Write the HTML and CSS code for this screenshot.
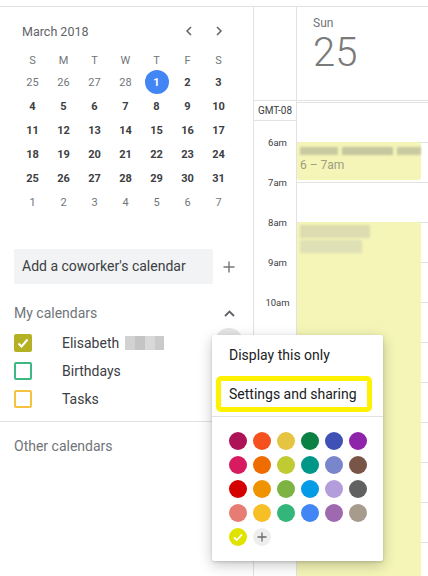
FILE: index.html
```html
<!DOCTYPE html>
<html>
<head>
<meta charset="utf-8">
<link rel="stylesheet" href="styles.css">
</head>
<body>
<div class="app">
  <aside class="sidebar">
    <div class="month-head">
      <span class="month-title">March 2018</span>
      <div class="nav">
        <span class="nav-btn"><svg width="8" height="10" viewBox="0 0 8 10"><polyline points="6,1 2,5 6,9" fill="none" stroke="#5f6368" stroke-width="1.5"/></svg></span>
        <span class="nav-btn"><svg width="8" height="10" viewBox="0 0 8 10"><polyline points="2,1 6,5 2,9" fill="none" stroke="#5f6368" stroke-width="1.5"/></svg></span>
      </div>
    </div>
    <div class="mini-grid">
      <span class="dow">S</span><span class="dow">M</span><span class="dow">T</span><span class="dow">W</span><span class="dow">T</span><span class="dow">F</span><span class="dow">S</span>
      <span class="d other">25</span><span class="d other">26</span><span class="d other">27</span><span class="d other">28</span><span class="d today"><i>1</i></span><span class="d">2</span><span class="d">3</span>
      <span class="d">4</span><span class="d">5</span><span class="d">6</span><span class="d">7</span><span class="d">8</span><span class="d">9</span><span class="d">10</span>
      <span class="d">11</span><span class="d">12</span><span class="d">13</span><span class="d">14</span><span class="d">15</span><span class="d">16</span><span class="d">17</span>
      <span class="d">18</span><span class="d">19</span><span class="d">20</span><span class="d">21</span><span class="d">22</span><span class="d">23</span><span class="d">24</span>
      <span class="d">25</span><span class="d">26</span><span class="d">27</span><span class="d">28</span><span class="d">29</span><span class="d">30</span><span class="d">31</span>
      <span class="d other">1</span><span class="d other">2</span><span class="d other">3</span><span class="d other">4</span><span class="d other">5</span><span class="d other">6</span><span class="d other">7</span>
    </div>
    <div class="add-row">
      <div class="add-input">Add a coworker's calendar</div>
      <span class="icon-btn"><svg width="12" height="12" viewBox="0 0 12 12"><path d="M6 0.5V11.5M0.5 6H11.5" stroke="#757575" stroke-width="1.4"/></svg></span>
    </div>
    <div class="section-head">
      <span>My calendars</span>
      <span class="icon-btn"><svg width="11" height="7" viewBox="0 0 11 7"><polyline points="1,6 5.5,1.5 10,6" fill="none" stroke="#5f6368" stroke-width="1.8"/></svg></span>
    </div>
    <ul class="cal-list">
      <li class="cal-item">
        <span class="cb cb-olive"><svg width="14" height="14" viewBox="0 0 14 14"><polyline points="2.5,7.5 5.5,10.5 11.5,3.5" fill="none" stroke="#fff" stroke-width="2"/></svg></span>
        <span class="cal-name">Elisabeth</span>
        <span class="blur-name"><b></b><b></b><b></b><b></b></span>
      </li>
      <li class="cal-item">
        <span class="cb cb-green"></span>
        <span class="cal-name">Birthdays</span>
      </li>
      <li class="cal-item">
        <span class="cb cb-yellow"></span>
        <span class="cal-name">Tasks</span>
      </li>
    </ul>
    <div class="divider"></div>
    <div class="section-head other">Other calendars</div>
    <span class="hover-circle"></span>
  </aside>
  <main class="main">
    <div class="head-row">
      <div class="gutter-head"></div>
      <div class="day-head">
        <div class="dow-name">Sun</div>
        <div class="day-num">25</div>
      </div>
    </div>
    <div class="body-row">
      <div class="gutter">
        <div class="tz">GMT-08</div>
        <div class="hours">
          <span class="hour">6am</span>
          <span class="hour">7am</span>
          <span class="hour">8am</span>
          <span class="hour">9am</span>
          <span class="hour">10am</span>
        </div>
      </div>
      <div class="day-col">
        <div class="event ev1">
          <div class="ev-blur"><b class="w1"></b><b class="w2"></b><b class="w3"></b></div>
          <div class="ev-time">6 – 7am</div>
        </div>
        <div class="event ev2">
          <div class="ev-blur2"><b class="r1"></b><b class="r2"></b></div>
        </div>
      </div>
    </div>
  </main>
</div>

<div class="popup">
  <div class="menu-item">Display this only</div>
  <div class="menu-item hl">Settings and sharing</div>
  <div class="menu-divider"></div>
  <div class="swatches">
    <span class="sw" style="background:#ad1457"></span>
    <span class="sw" style="background:#f4511e"></span>
    <span class="sw" style="background:#e4c441"></span>
    <span class="sw" style="background:#0b8043"></span>
    <span class="sw" style="background:#3f51b5"></span>
    <span class="sw" style="background:#8e24aa"></span>
    <span class="sw" style="background:#d81b60"></span>
    <span class="sw" style="background:#ef6c00"></span>
    <span class="sw" style="background:#c0ca33"></span>
    <span class="sw" style="background:#009688"></span>
    <span class="sw" style="background:#7986cb"></span>
    <span class="sw" style="background:#795548"></span>
    <span class="sw" style="background:#d50000"></span>
    <span class="sw" style="background:#f09300"></span>
    <span class="sw" style="background:#7cb342"></span>
    <span class="sw" style="background:#039be5"></span>
    <span class="sw" style="background:#b39ddb"></span>
    <span class="sw" style="background:#616161"></span>
    <span class="sw" style="background:#e67c73"></span>
    <span class="sw" style="background:#f6bf26"></span>
    <span class="sw" style="background:#33b679"></span>
    <span class="sw" style="background:#4285f4"></span>
    <span class="sw" style="background:#9e69af"></span>
    <span class="sw" style="background:#a79b8e"></span>
    <span class="sw sw-sel"><svg width="12" height="12" viewBox="0 0 12 12"><polyline points="2,6.5 4.8,9 10,3.5" fill="none" stroke="#fff" stroke-width="1.8"/></svg></span>
    <span class="sw sw-add"><svg width="10" height="10" viewBox="0 0 10 10"><path d="M5 0.5V9.5M0.5 5H9.5" stroke="#6b6b6b" stroke-width="1.3"/></svg></span>
  </div>
</div>
</body>
</html>
```

FILE: styles.css
```css
* { box-sizing: border-box; }
html, body {
  margin: 0;
  padding: 0;
  width: 428px;
  height: 576px;
  overflow: hidden;
  background: #fff;
  font-family: Roboto, "Liberation Sans", Arial, sans-serif;
  color: #3c4043;
  position: relative;
}
.app {
  margin-top: 6px;
  border-top: 1px solid #e2e2e2;
  height: 570px;
  display: flex;
}

/* ---------- sidebar ---------- */
.sidebar {
  width: 254px;
  flex: none;
  border-right: 1px solid #e2e2e2;
  position: relative;
}
.month-head {
  margin-top: 12px;
  height: 24px;
  display: flex;
  align-items: center;
  padding-left: 22px;
  padding-right: 19px;
}
.month-title {
  font-size: 12.5px;
  color: #5f6368;
}
.nav { margin-left: auto; display: flex; }
.nav-btn {
  width: 30px;
  height: 24px;
  display: flex;
  align-items: center;
  justify-content: center;
}
.mini-grid {
  margin-top: 7px;
  padding-left: 17px;
  display: grid;
  grid-template-columns: repeat(7, 31px);
  grid-auto-rows: 24px;
  grid-template-rows: 20px;
  font-size: 11px;
}
.dow {
  display: flex;
  align-items: center;
  justify-content: center;
  color: #70757a;
}
.d {
  display: flex;
  align-items: center;
  justify-content: center;
  font-weight: 700;
  color: #3c4043;
}
.d.other { font-weight: 400; color: #70757a; }
.d.today i {
  font-style: normal;
  width: 24px;
  height: 24px;
  border-radius: 50%;
  background: #4285f4;
  color: #fff;
  display: flex;
  align-items: center;
  justify-content: center;
}
.add-row {
  margin-top: 35px;
  display: flex;
  align-items: center;
  padding-left: 14px;
}
.add-input {
  width: 199px;
  height: 35px;
  background: #f1f3f4;
  border-radius: 2px;
  padding-left: 8px;
  font-size: 14px;
  line-height: 35px;
  color: #3c4043;
}
.icon-btn {
  width: 32px;
  height: 24px;
  display: flex;
  align-items: center;
  justify-content: center;
}
.section-head {
  margin-top: 17px;
  height: 24px;
  display: flex;
  align-items: center;
  padding-left: 14px;
  font-size: 14px;
  color: #70757a;
}
.section-head span:first-child { width: 199px; }
.section-head.other { margin-top: 12px; }
.cal-list {
  list-style: none;
  margin: 4px 0 0;
  padding: 0 0 0 14px;
}
.cal-item {
  height: 28px;
  display: flex;
  align-items: center;
  font-size: 14px;
  color: #3c4043;
}
.cb {
  width: 18px;
  height: 18px;
  border-radius: 2px;
  margin-right: 30px;
  display: flex;
  align-items: center;
  justify-content: center;
}
.cb-olive { background: #b5b124; }
.cb-green { border: 2px solid #3cb882; }
.cb-yellow { border: 2px solid #f5c140; }
.blur-name {
  display: flex;
  margin-left: 6px;
  height: 14px;
  filter: blur(0.6px);
}
.blur-name b { width: 10px; height: 14px; background: #d2d2d2; }
.blur-name b:nth-child(2) { background: #c4c4c4; }
.blur-name b:nth-child(3) { background: #d8d8d8; }
.blur-name b:nth-child(4) { background: #cacaca; width: 9px; }
.divider {
  margin-top: 8px;
  height: 1px;
  background: #e2e2e2;
}
.hover-circle {
  position: absolute;
  left: 215px;
  top: 321px;
  width: 28px;
  height: 28px;
  border-radius: 50%;
  background: #e6e6e6;
}

/* ---------- main ---------- */
.main {
  flex: 1;
  display: flex;
  flex-direction: column;
}
.head-row {
  height: 94px;
  display: flex;
  border-bottom: 1px solid #e2e2e2;
}
.gutter-head {
  width: 43px;
  border-right: 1px solid #e2e2e2;
}
.day-head {
  flex: 1;
  padding-left: 16px;
  padding-top: 8px;
}
.dow-name {
  font-size: 12px;
  line-height: 16px;
  color: #70757a;
}
.day-num {
  margin-top: 2px;
  font-size: 40px;
  line-height: 40px;
  font-weight: 300;
  color: #7a7a7a;
}
.body-row {
  flex: 1;
  display: flex;
}
.gutter {
  width: 43px;
  border-right: 1px solid #e2e2e2;
}
.tz {
  height: 20px;
  border-bottom: 1px solid #e2e2e2;
  font-size: 10px;
  line-height: 19px;
  text-align: center;
  color: #3c4043;
}
.hours {
  padding-top: 12px;
  display: flex;
  flex-direction: column;
  gap: 20px;
}
.hour {
  height: 20px;
  line-height: 20px;
  font-size: 9.5px;
  text-align: center;
  padding-left: 5px;
  color: #3c4043;
}
.day-col {
  flex: 1;
  position: relative;
  background-image: linear-gradient(#e2e2e2 1px, transparent 1px);
  background-size: 100% 40px;
  background-position: 0 1px;
}
.event {
  position: absolute;
  left: 0;
  width: 124px;
  background: #f4f5b6;
  border-radius: 3px;
}
.ev1 { top: 41px; height: 38px; padding: 5px 0 0 3px; }
.ev2 { top: 121px; bottom: -10px; padding: 3px 0 0 3px; }
.ev-blur { display: flex; gap: 4px; height: 9px; filter: blur(0.9px); }
.ev-blur b { background: #cacaa2; height: 8px; }
.ev-blur .w1 { width: 38px; }
.ev-blur .w2 { width: 52px; background: #c6c69f; }
.ev-blur .w3 { width: 24px; }
.ev-time {
  margin-top: 2px;
  font-size: 12px;
  color: #9e9e84;
}
.ev-blur2 { display: flex; flex-direction: column; gap: 2px; filter: blur(1px); }
.ev-blur2 b { height: 13px; background: #dcdcb0; }
.ev-blur2 .r1 { width: 70px; }
.ev-blur2 .r2 { width: 62px; background: #e0e0b6; }

/* ---------- popup ---------- */
.popup {
  position: absolute;
  left: 212px;
  top: 335px;
  width: 171px;
  height: 226px;
  background: #fff;
  border-radius: 2px;
  box-shadow: 0 4px 14px rgba(0,0,0,0.22), 0 1px 3px rgba(0,0,0,0.15);
}
.menu-item {
  height: 40px;
  line-height: 40px;
  padding-left: 17px;
  font-size: 14px;
  color: #202124;
}
.menu-item.hl {
  margin: 1px 11px 0 4px;
  height: 36px;
  line-height: 26px;
  border: 5px solid #fff200;
  border-radius: 5px;
  padding-left: 8px;
}
.menu-divider {
  margin-top: 4px;
  height: 1px;
  background: #e2e2e2;
}
.swatches {
  padding: 15px 0 0 17px;
  display: grid;
  grid-template-columns: repeat(6, 18px);
  grid-auto-rows: 18px;
  gap: 6px;
}
.sw {
  width: 18px;
  height: 18px;
  border-radius: 50%;
  display: flex;
  align-items: center;
  justify-content: center;
}
.sw-sel { background: #e0e300; }
.sw-add { background: #eeeeee; }
```
